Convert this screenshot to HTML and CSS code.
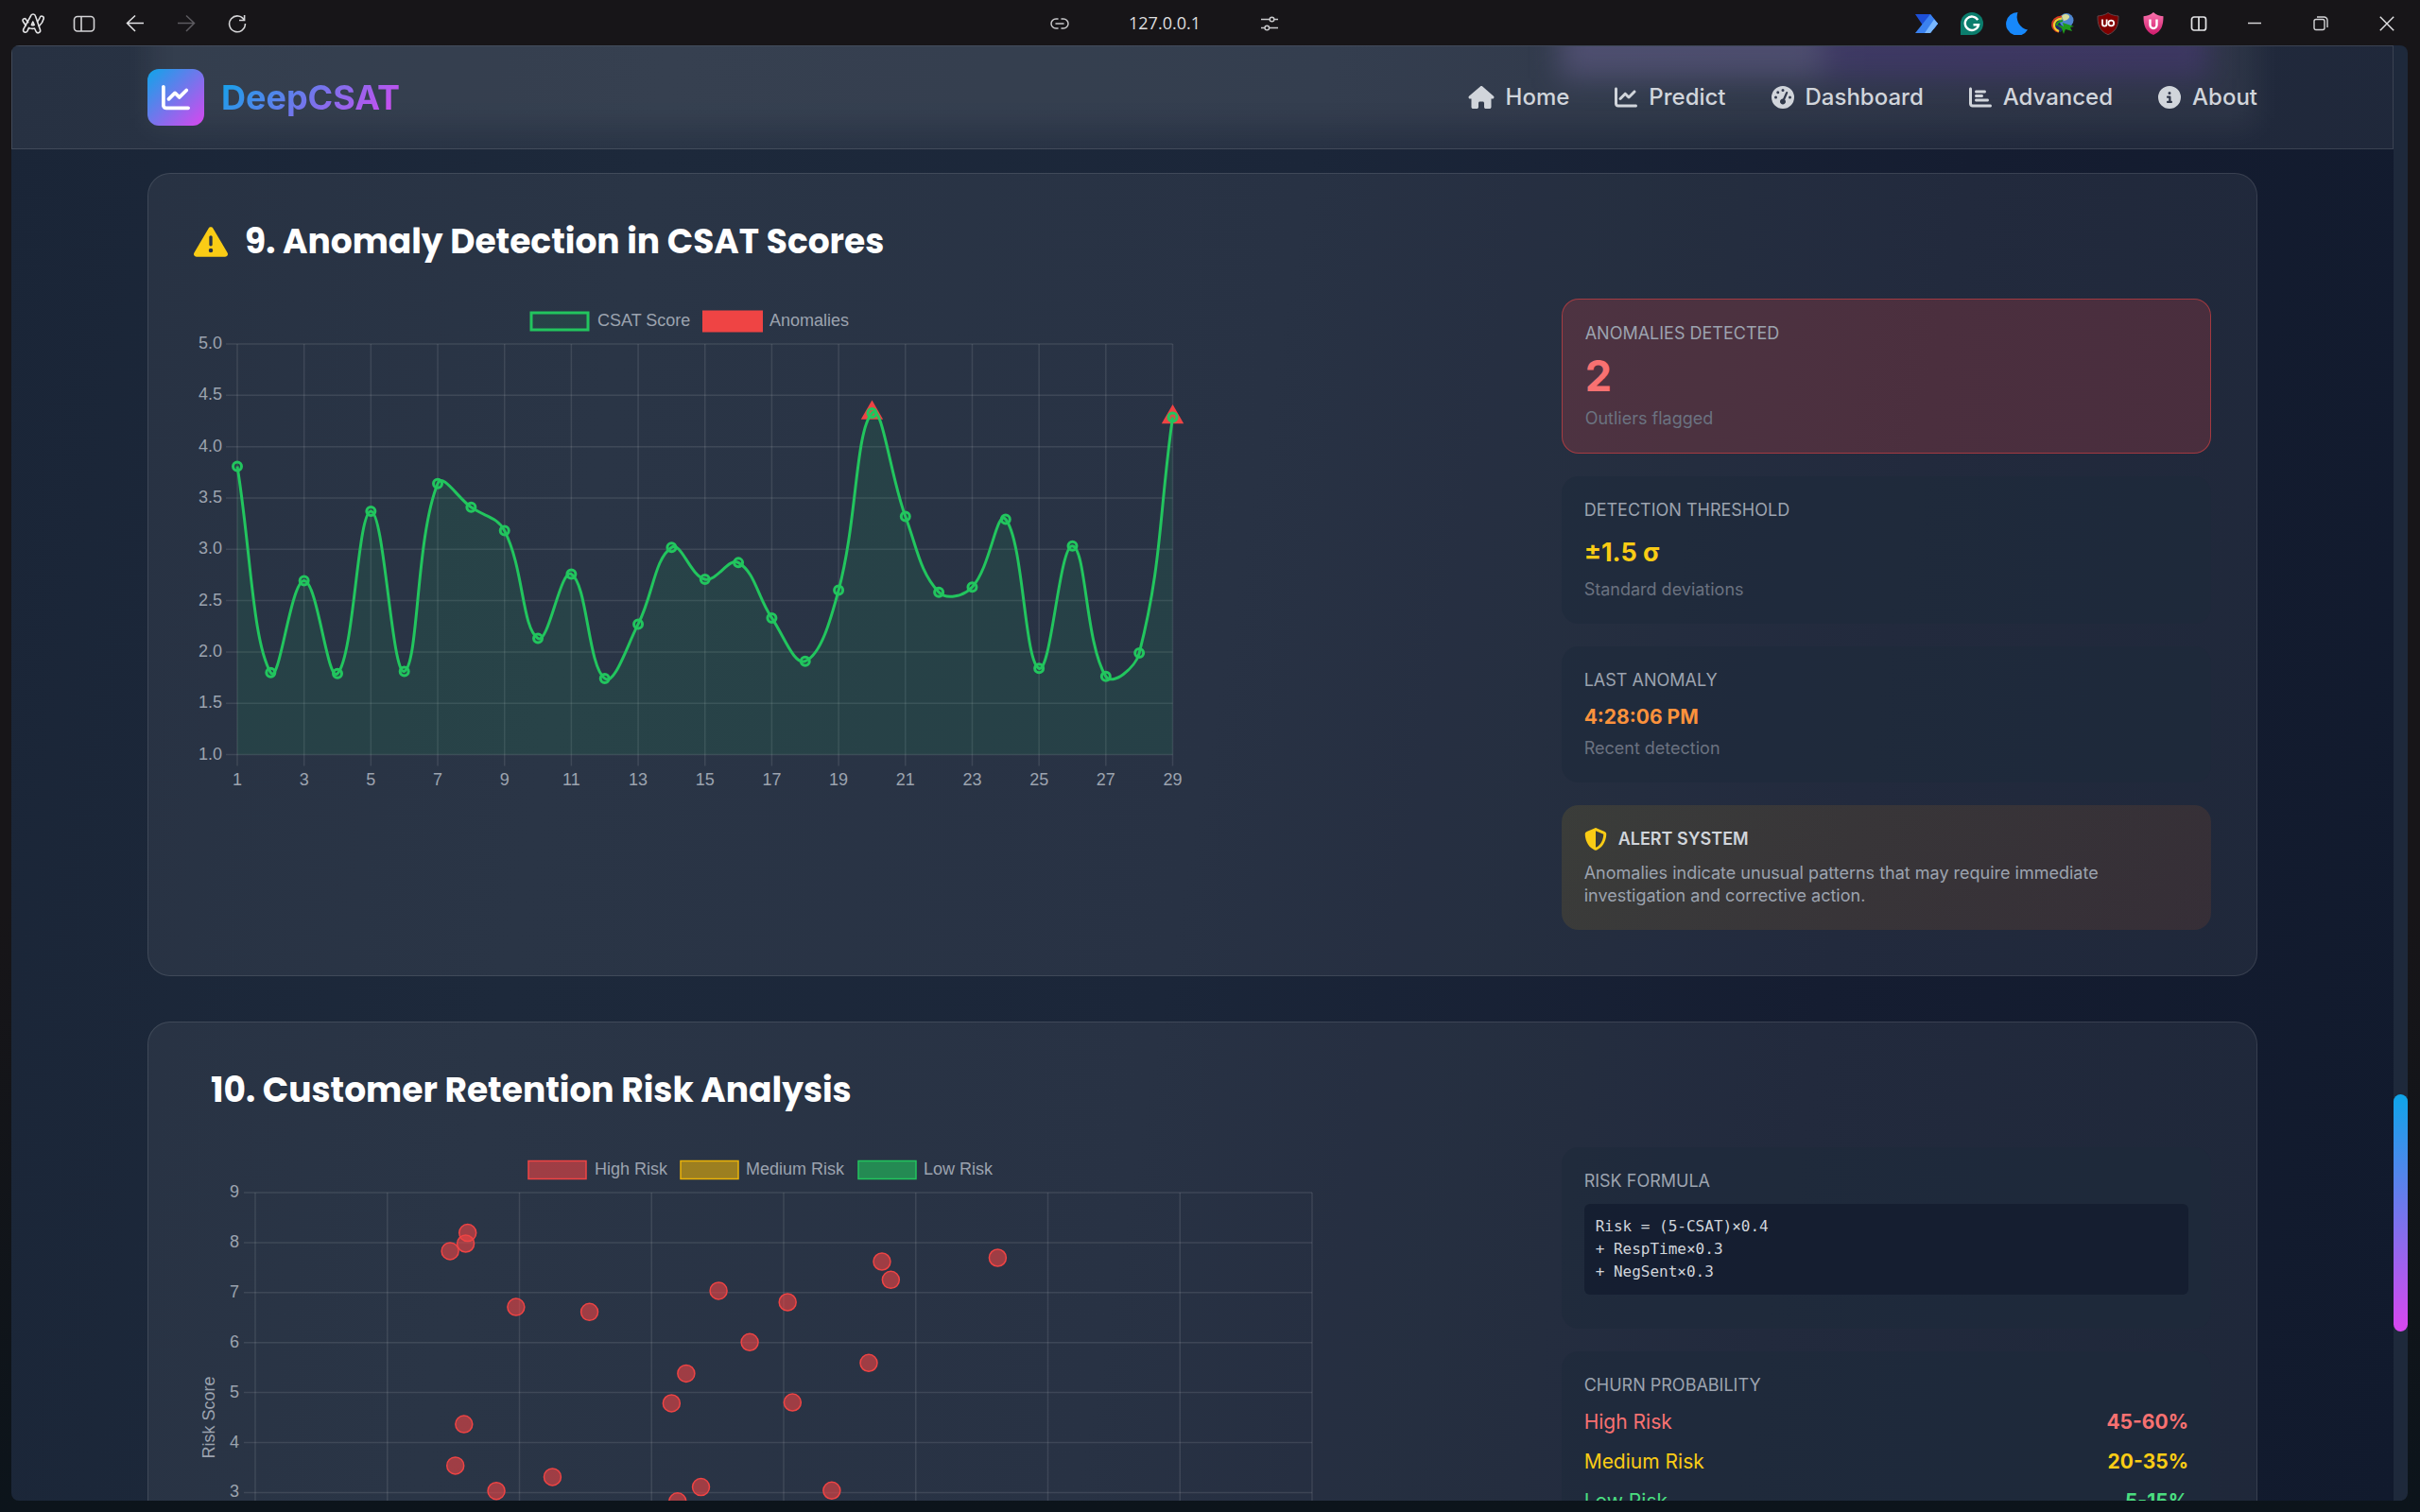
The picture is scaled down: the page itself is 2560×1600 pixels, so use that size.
FILE: index.html
```html
<!DOCTYPE html>
<html lang="en">
<head>
<meta charset="utf-8">
<meta name="viewport" content="width=device-width, initial-scale=1">
<title>DeepCSAT - Advanced Analytics</title>
<link rel="stylesheet" href="styles.css">
</head>
<body>
<header class="browser-bar">
  <div class="bar-group bar-left">
    <button class="tool" aria-label="Browser menu"><svg width="26" height="24" viewBox="0 0 26 24" fill="none" stroke="#e4e4e6" stroke-width="1.6" stroke-linejoin="round" stroke-linecap="round"><path d="M10.500 4c.6-2.600 4.400-2.600 5 0l5 14.500c.9 3-2.800 4.500-4.300 2l-1.700-3.500c-2 .6-4.200.3-6-.6l-1.500 3.500c-1.600 2.600-5 1-4.300-1.700z"/><path d="M12.800 10l-1.400 3.400c1 .3 2 .3 2.800 0z"/><path d="M5.500 14C4 12.300 3.200 11 2.300 9.500 1.300 7 4.600 5.500 5.800 8c.5 1 1.200 1.900 2 2.700"/><path d="M17.500 10c1.300-1.500 2.100-3 2.700-4.500.9-2.500 4.600-1.400 4 1.200-.8 3.300-2.600 5.900-4.900 8"/></svg></button>
    <button class="tool" aria-label="Toggle sidebar"><svg width="24" height="20" viewBox="0 0 24 20" fill="none" stroke="#d4d4d6" stroke-width="1.6"><rect x="1.500" y="2.500" width="21" height="15.500" rx="3.500"/><path d="M9 2.500V18"/></svg></button>
    <button class="tool" aria-label="Back"><svg width="20" height="20" viewBox="0 0 20 20" fill="none" stroke="#e4e4e6" stroke-width="1.500"><path d="M19 9.500H1.500M10 1.500l-8.500 8 8.500 8.500"/></svg></button>
    <button class="tool" aria-label="Forward"><svg width="20" height="20" viewBox="0 0 20 20" fill="none" stroke="#5d5b60" stroke-width="1.500"><path d="M1 9.500h17.500M10 1.500l8.500 8-8.500 8.500"/></svg></button>
    <button class="tool" aria-label="Reload"><svg width="20" height="20" viewBox="0 0 20 20" fill="none" stroke="#d4d4d6" stroke-width="1.600"><path d="M17.500 6.500A8.400 8.400 0 1 0 18.400 10M17.600 1v5.500H12"/></svg></button>
  </div>
  <div class="bar-group bar-address">
    <button class="tool-slim" aria-label="Copy link"><svg width="20" height="14" viewBox="0 0 20 14" fill="none" stroke="#c8c8ca" stroke-width="1.500" stroke-linecap="round"><path d="M8 2H6a5 5 0 0 0 0 10h2M12 2h2a5 5 0 0 1 0 10h-2M6 7h8"/></svg></button>
    <span class="address">127.0.0.1</span>
    <button class="tool-slim" aria-label="Site settings"><svg width="18" height="16" viewBox="0 0 18 16" fill="none" stroke="#c8c8ca" stroke-width="1.500"><path d="M0 3.500h9M14 3.500h4M0 12.500h4M9 12.500h9"/><circle cx="11.500" cy="3.500" r="2.300"/><circle cx="6.300" cy="12.500" r="2.300"/></svg></button>
  </div>
  <div class="bar-group bar-right">
    <button class="ext" aria-label="Power Automate"><svg width="24" height="22" viewBox="0 0 24 22"><path d="M0 1h16l8 10-4 5.500H10.500z" fill="#1d4fd7"/><path d="M0 21L16 1l8 10-8 10z" fill="#3b82f0"/><path d="M10 21L20 6.500l4 4.500-8 10z" fill="#7ab8ff"/></svg></button>
    <button class="ext" aria-label="Grammarly"><svg width="24" height="24" viewBox="0 0 24 24"><path d="M0 24V12a12 12 0 1 1 12 12z" fill="#0b7d6d"/><path d="M18.200 8.200A7.200 7.200 0 1 0 19 13.200h-5.500" fill="none" stroke="#fff" stroke-width="2.400"/></svg></button>
    <button class="ext" aria-label="Dark mode"><svg width="24" height="24" viewBox="0 0 24 24"><path d="M12.500 0A14 14 0 0 0 23 18.500 12.300 12.300 0 1 1 12.500 0z" fill="#1788fb"/></svg></button>
    <button class="ext" aria-label="Download manager"><svg width="24" height="22" viewBox="0 0 24 22"><path d="M11 3.500C4 4 1 8 1 12.500S6 20 10 20l4-5z" fill="#1d2a6b"/><circle cx="16" cy="7.500" r="7.500" fill="#4f86cf"/><path d="M11 3c3-3 7-2 8 0s-3 5-6 5z" fill="#d6dc9a"/><path d="M11 3.500C4 4 1 8 1 12.500S5 19 8 20" fill="none" stroke="#d93a1e" stroke-width="1.800"/><path d="M11.500 5.500C6 6 3 9 3 13s3 5 5 6" fill="none" stroke="#f2d02c" stroke-width="2.200"/><path d="M12 8C8 8.500 6 10 5.500 13" fill="none" stroke="#1f9a1c" stroke-width="2"/><path d="M5 12l8 2-1-4 12 4-4 1 2 4-7-2-2 5-2-6z" fill="#1f9a1c"/></svg></button>
    <button class="ext" aria-label="uBlock Origin"><svg width="24" height="24" viewBox="0 0 24 24"><path d="M12 .5c3.500 2.600 7.500 3 11 3.500 0 8-1 15.500-11 19.700C2 19.500 1 12 1 4c3.500-.5 7.500-.9 11-3.500z" fill="#800000" stroke="#5d4448"/><path d="M6 7.500v4.800a2.300 2.300 0 0 0 4.600 0V7.500" fill="none" stroke="#fff" stroke-width="1.800"/><circle cx="15.300" cy="11.500" r="2.900" fill="none" stroke="#fff" stroke-width="1.800"/></svg></button>
    <button class="ext" aria-label="U shield"><svg width="22" height="24" viewBox="0 0 22 24"><defs><linearGradient id="pink" x2="0" y2="1"><stop stop-color="#fb74ae"/><stop offset="1" stop-color="#cf1a6c"/></linearGradient></defs><path d="M11 0c3 2.700 6.500 3.800 10.500 4.200C21.500 13 20 20 11 24 2 20 .5 13 .5 4.200 4.500 3.800 8 2.700 11 0z" fill="url(#pink)"/><path d="M7.500 7.500v6a3.500 3.500 0 0 0 7 0v-6" fill="none" stroke="#fff" stroke-width="2.400"/></svg></button>
    <button class="ext" aria-label="Split view"><svg width="18" height="18" viewBox="0 0 18 18" fill="none" stroke="#e4e4e6" stroke-width="1.700"><rect x="1.500" y="2" width="15" height="14" rx="2.500"/><path d="M9 2v14"/></svg></button>
    <button class="win" aria-label="Minimize"><svg width="16" height="16" viewBox="0 0 16 16" fill="none" stroke="#d4d4d6" stroke-width="1.500"><path d="M1 7.500h14"/></svg></button>
    <button class="win" aria-label="Restore"><svg width="16" height="16" viewBox="0 0 16 16" fill="none" stroke="#d4d4d6" stroke-width="1.400"><rect x="1" y="3.500" width="11" height="11" rx="2"/><path d="M4 1h7.500A3.500 3.500 0 0 1 15 4.500V12"/></svg></button>
    <button class="win" aria-label="Close"><svg width="16" height="16" viewBox="0 0 16 16" fill="none" stroke="#e4e4e6" stroke-width="1.400"><path d="M.8.800l14.400 14.400M15.200.800L.800 15.200"/></svg></button>
  </div>
</header>

<div class="window">
  <div class="page">
    <nav class="navbar">
      <div class="container navbar-inner">
        <a class="brand" href="#home">
          <span class="brand-mark"><svg width="30" height="30" viewBox="0 0 512 512" fill="#fff"><path d="M64 64c0-17.700-14.300-32-32-32S0 46.300 0 64V400c0 44.200 35.800 80 80 80H480c17.700 0 32-14.300 32-32s-14.300-32-32-32H80c-8.800 0-16-7.200-16-16V64zm406.600 86.600c12.500-12.500 12.500-32.800 0-45.300s-32.800-12.500-45.300 0L320 210.700l-57.400-57.400c-12.500-12.500-32.800-12.500-45.300 0l-112 112c-12.500 12.500-12.500 32.800 0 45.300s32.800 12.500 45.300 0L240 221.300l57.400 57.400c12.500 12.500 32.800 12.500 45.300 0l128-128z"/></svg></span>
          <span class="brand-name">DeepCSAT</span>
        </a>
        <div class="nav-links">
          <a href="#home"><svg width="28" height="24" viewBox="0 0 576 512"><path d="M575.800 255.500c0 18-15 32.100-32 32.100h-32l.7 160.200c0 2.700-.2 5.400-.5 8.100V472c0 22.100-17.900 40-40 40H456c-1.100 0-2.200 0-3.300-.1c-1.400 .1-2.800 .1-4.200 .1H416 392c-22.100 0-40-17.900-40-40V448 384c0-17.700-14.300-32-32-32H256c-17.700 0-32 14.300-32 32v64 24c0 22.100-17.900 40-40 40H160 128.100c-1.500 0-3-.1-4.500-.2c-1.200 .1-2.400 .2-3.600 .2H104c-22.100 0-40-17.900-40-40V360c0-.9 0-1.900 .1-2.800V287.600H32c-18 0-32-14-32-32.100c0-9 3-17 10-24L266.400 8c7-7 15-8 22-8s15 2 21 7L564.800 231.500c8 7 12 15 11 24z"/></svg>Home</a>
          <a href="#predict"><svg width="24" height="24" viewBox="0 0 512 512"><path d="M64 64c0-17.700-14.300-32-32-32S0 46.300 0 64V400c0 44.200 35.800 80 80 80H480c17.700 0 32-14.300 32-32s-14.300-32-32-32H80c-8.800 0-16-7.200-16-16V64zm406.600 86.600c12.500-12.500 12.500-32.800 0-45.300s-32.800-12.500-45.300 0L320 210.700l-57.400-57.400c-12.500-12.500-32.800-12.500-45.300 0l-112 112c-12.500 12.500-12.500 32.800 0 45.300s32.800 12.500 45.300 0L240 221.300l57.400 57.400c12.500 12.500 32.800 12.500 45.300 0l128-128z"/></svg>Predict</a>
          <a href="#dashboard"><svg width="24" height="24" viewBox="0 0 512 512"><path d="M0 256a256 256 0 1 1 512 0A256 256 0 1 1 0 256zM288 96a32 32 0 1 0 -64 0 32 32 0 1 0 64 0zM256 416c35.300 0 64-28.700 64-64c0-17.400-6.900-33.100-18.100-44.600L366 161.700c5.300-12.100-.2-26.300-12.300-31.600s-26.300 .2-31.600 12.300L257.900 288c-.6 0-1.300 0-1.900 0c-35.300 0-64 28.700-64 64s28.700 64 64 64zM176 144a32 32 0 1 0 -64 0 32 32 0 1 0 64 0zM96 288a32 32 0 1 0 0-64 32 32 0 1 0 0 64zm352-32a32 32 0 1 0 -64 0 32 32 0 1 0 64 0z"/></svg>Dashboard</a>
          <a href="#advanced"><svg width="24" height="24" viewBox="0 0 512 512"><path d="M32 32c17.700 0 32 14.300 32 32V400c0 8.800 7.200 16 16 16H480c17.700 0 32 14.300 32 32s-14.300 32-32 32H80c-44.200 0-80-35.800-80-80V64C0 46.300 14.300 32 32 32zm96 96c0-17.700 14.300-32 32-32l192 0c17.700 0 32 14.300 32 32s-14.300 32-32 32l-192 0c-17.700 0-32-14.300-32-32zm32 64H288c17.700 0 32 14.300 32 32s-14.300 32-32 32H160c-17.700 0-32-14.300-32-32s14.300-32 32-32zm0 96H416c17.700 0 32 14.300 32 32s-14.300 32-32 32H160c-17.700 0-32-14.300-32-32s14.300-32 32-32z"/></svg>Advanced</a>
          <a href="#about"><svg width="24" height="24" viewBox="0 0 512 512"><path d="M256 512A256 256 0 1 0 256 0a256 256 0 1 0 0 512zM216 336h24V272H216c-13.300 0-24-10.700-24-24s10.700-24 24-24h48c13.300 0 24 10.700 24 24v88h8c13.300 0 24 10.700 24 24s-10.700 24-24 24H216c-13.300 0-24-10.700-24-24s10.700-24 24-24zm40-208a32 32 0 1 1 0 64 32 32 0 1 1 0-64z"/></svg>About</a>
        </div>
      </div>
    </nav>

    <main class="container sections">
      <section class="card">
        <h2 class="card-title"><svg width="36" height="36" viewBox="0 0 512 512" fill="#facc15"><path d="M256 32c14.200 0 27.300 7.500 34.500 19.800l216 368c7.300 12.400 7.300 27.700 .2 40.100S486.300 480 472 480H40c-14.300 0-27.600-7.700-34.700-20.100s-7-27.800 .2-40.100l216-368C228.700 39.500 241.800 32 256 32zm0 128c-13.300 0-24 10.700-24 24V296c0 13.300 10.700 24 24 24s24-10.700 24-24V184c0-13.300-10.700-24-24-24zm32 224a32 32 0 1 0 -64 0 32 32 0 1 0 64 0z"/></svg>9. Anomaly Detection in CSAT Scores</h2>
        <div class="card-grid">
          <div class="chart-area">
            <svg class="chart" id="anomaly-chart" width="1060" height="528" viewBox="0 0 1060 528" role="img" aria-label="CSAT score line chart with anomalies"></svg>
          </div>
          <div class="stats">
            <div class="stat stat-danger">
              <p class="stat-label">ANOMALIES DETECTED</p>
              <p class="stat-value value-xl">2</p>
              <p class="stat-note">Outliers flagged</p>
            </div>
            <div class="stat">
              <p class="stat-label label-spaced">DETECTION THRESHOLD</p>
              <p class="stat-value value-lg">±1.5 σ</p>
              <p class="stat-note">Standard deviations</p>
            </div>
            <div class="stat">
              <p class="stat-label label-spaced">LAST ANOMALY</p>
              <p class="stat-value value-md">4:28:06 PM</p>
              <p class="stat-note">Recent detection</p>
            </div>
            <div class="stat stat-alert">
              <p class="alert-title"><svg width="24" height="24" viewBox="0 0 512 512" fill="#facc15"><path d="M256 0c4.600 0 9.200 1 13.400 2.900L457.700 82.800c22 9.300 38.400 31 38.300 57.200c-.5 99.200-41.300 280.700-213.600 363.200c-16.700 8-36.100 8-52.800 0C57.300 420.700 16.500 239.200 16 140c-.1-26.200 16.300-47.900 38.300-57.200L242.700 2.900C246.800 1 251.400 0 256 0zm0 66.800V444.800C394 378 431.100 230.100 432 141.400L256 66.800l0 0z"/></svg>ALERT SYSTEM</p>
              <p class="alert-text">Anomalies indicate unusual patterns that may require immediate investigation and corrective action.</p>
            </div>
          </div>
        </div>
      </section>

      <section class="card">
        <h2 class="card-title"><span class="title-icon"></span>10. Customer Retention Risk Analysis</h2>
        <div class="card-grid">
          <div class="chart-area">
            <svg class="chart" id="risk-chart" width="1200" height="600" viewBox="0 0 1200 600" role="img" aria-label="Customer retention risk scatter chart"></svg>
          </div>
          <div class="stats">
            <div class="stat">
              <p class="stat-label label-spaced">RISK FORMULA</p>
              <pre class="formula">Risk = (5-CSAT)×0.4
+ RespTime×0.3
+ NegSent×0.3</pre>
            </div>
            <div class="stat">
              <p class="stat-label label-spaced">CHURN PROBABILITY</p>
              <dl class="churn">
                <div class="churn-row high"><dt>High Risk</dt><dd>45-60%</dd></div>
                <div class="churn-row medium"><dt>Medium Risk</dt><dd>20-35%</dd></div>
                <div class="churn-row low"><dt>Low Risk</dt><dd>5-15%</dd></div>
              </dl>
            </div>
          </div>
        </div>
      </section>
    </main>
  </div>
  <div class="scroll-track"><div class="scroll-thumb"></div></div>
</div>
<script src="charts.js"></script>
</body>
</html>
```
FILE: styles.css
```css
*, *::before, *::after { box-sizing: border-box; }

body {
  margin: 0;
  height: 100vh;
  display: flex;
  flex-direction: column;
  overflow: hidden;
  background: linear-gradient(#171518 60%, #0c141b);
  font-family: Inter, "Liberation Sans", sans-serif;
  font-size: 24px;
  color: #fff;
}

p, h2, dl, dd, pre { margin: 0; }
svg { display: block; flex: none; }
a { color: inherit; text-decoration: none; }

/* Browser toolbar */
.browser-bar {
  height: 48px;
  flex: none;
  display: grid;
  grid-template-columns: 1fr auto 1fr;
}
.bar-group { display: flex; align-items: center; }
.bar-left { padding-left: 8px; }
.bar-address { padding-right: 96px; }
.bar-right { justify-content: flex-end; }
.browser-bar button {
  height: 48px;
  padding: 2px 0 0;
  border: 0;
  background: none;
  display: flex;
  align-items: center;
  justify-content: center;
}
.tool { width: 54px; }
.tool-slim { width: 40px; }
.ext { width: 48px; }
.win { width: 70px; }
.address {
  width: 182px;
  text-align: center;
  font: 18px/24px "Open Sans", sans-serif;
  color: #dededf;
}

/* Page frame */
.window {
  flex: 1;
  min-height: 0;
  margin: 0 13px 12px 12px;
  display: flex;
  border-radius: 8px;
  overflow: hidden;
}
.page {
  flex: 1;
  overflow: hidden;
  background: linear-gradient(100deg, #1a2537 0%, #1d293b 25%, #1b2639 50%, #151d31 75%, #111a2d 100%);
}
.scroll-track {
  width: 15px;
  background: #1e293b;
  display: grid;
  grid-template-rows: 1110fr 251fr 179fr;
}
.scroll-thumb {
  grid-row: 2;
  border-radius: 8px;
  background: linear-gradient(#0ea5e9, #d946ef);
}
.container { width: calc(100% - 96px); max-width: 2232px; margin: 0 auto; }

/* Navigation */
.navbar {
  position: relative;
  z-index: 0;
  overflow: hidden;
  border: 1px solid rgba(255, 255, 255, 0.12);
  background: rgba(255, 255, 255, 0.06);
}
/* Frosted remains of the card and panel scrolled underneath */
.navbar::before,
.navbar::after {
  content: "";
  position: absolute;
  z-index: -1;
  filter: blur(15px);
}
.navbar::before {
  inset: -40px 144px 22px;
  background: rgba(255, 255, 255, 0.06);
}
.navbar::after {
  inset: -40px 194px 74px 65%;
  background: linear-gradient(90deg, rgba(125, 110, 170, 0.38) 40%, rgba(90, 60, 150, 0.34) 41%);
}
.navbar-inner {
  height: 108px;
  display: flex;
  align-items: center;
  justify-content: space-between;
}
.brand { display: flex; align-items: center; gap: 18px; }
.brand-mark {
  width: 60px;
  height: 60px;
  display: grid;
  place-items: center;
  border-radius: 12px;
  background: linear-gradient(135deg, #0ea5e9, #d946ef);
}
.brand-name {
  font-size: 36px;
  line-height: 48px;
  font-weight: 700;
  background: linear-gradient(135deg, #0ea5e9, #d946ef);
  -webkit-background-clip: text;
  background-clip: text;
  color: transparent;
}
.nav-links { display: flex; gap: 48px; }
.nav-links a {
  display: flex;
  align-items: center;
  gap: 12px;
  line-height: 36px;
  font-weight: 500;
  color: #d1d5db;
}
.nav-links svg { fill: #d1d5db; }

/* Cards */
.sections {
  padding-top: 25px;
  display: flex;
  flex-direction: column;
  gap: 48px;
}
.card {
  padding: 48px;
  border: 1px solid rgba(255, 255, 255, 0.11);
  border-radius: 24px;
  background: rgba(255, 255, 255, 0.058);
}
.card-title {
  display: flex;
  align-items: center;
  gap: 18px;
  margin-bottom: 36px;
  font: 700 36px/48px Poppins, Inter, sans-serif;
}
.card-grid {
  display: grid;
  grid-template-columns: repeat(3, minmax(0, 1fr));
  gap: 36px;
}
.chart-area { grid-column: span 2; }
.chart { max-width: 100%; font: 18px "Liberation Sans", sans-serif; }
.chart text { fill: #9ca3af; }

/* Statistic panels */
.stats { display: flex; flex-direction: column; gap: 24px; }
.stat {
  padding: 24px;
  border-radius: 18px;
  background: rgba(30, 42, 59, 0.55);
  font-size: 18px;
  line-height: 24px;
}
.stat-danger { background: rgba(239, 68, 68, 0.2); border: 1px solid rgba(239, 68, 68, 0.55); }
.stat-alert { background: linear-gradient(135deg, rgba(234, 179, 8, 0.11), rgba(249, 100, 22, 0.1)); }
.stat-label { margin-bottom: 6px; color: #9ca3af; }
.label-spaced { margin-bottom: 12px; }
.stat-value { margin-bottom: 6px; font-weight: 700; }
.value-xl { font-size: 45px; line-height: 54px; color: #f87171; }
.value-lg { font-size: 27px; line-height: 42px; color: #facc15; }
.value-md { font-size: 21px; line-height: 30px; color: #fb923c; }
.stat-note { color: #6b7280; }
.alert-title {
  display: flex;
  gap: 12px;
  margin-bottom: 12px;
  font-weight: 600;
  color: #d1d5db;
}
.alert-text { color: #9ca3af; }

.formula {
  margin-bottom: 12px;
  padding: 12px;
  border-radius: 6px;
  background: rgba(15, 23, 42, 0.6);
  font: 16px/24px "DejaVu Sans Mono", monospace;
  color: #d1d5db;
}
.churn { display: flex; flex-direction: column; gap: 12px; font-size: 21px; line-height: 30px; }
.churn-row { display: flex; justify-content: space-between; }
.churn dd { font-weight: 700; }
.high { color: #f87171; }
.medium { color: #facc15; }
.low { color: #4ade80; }
```
FILE: charts.js
```js
const NS = 'http://www.w3.org/2000/svg';
const GRID = 'rgba(255,255,255,0.1)';

function add(parent, tag, attrs, text) {
  const el = document.createElementNS(NS, tag);
  for (const key in attrs) el.setAttribute(key, attrs[key]);
  if (text !== undefined) el.textContent = text;
  parent.appendChild(el);
  return el;
}

function line(svg, x1, y1, x2, y2) {
  add(svg, 'line', { x1, y1, x2, y2, stroke: GRID, 'stroke-width': 1.5 });
}

function legend(svg, items) {
  for (const it of items) {
    add(svg, 'rect', {
      x: it.x, y: 24 - it.h / 2, width: it.w, height: it.h,
      fill: it.fill, stroke: it.stroke, 'stroke-width': it.sw
    });
    add(svg, 'text', { x: it.tx, y: 29 }, it.label);
  }
}

// Tension 0.4 spline through the points, with control points kept inside the plot area
function spline(pts, top, bottom) {
  const clamp = v => Math.max(top, Math.min(bottom, v));
  const ctrl = pts.map((p, i) => {
    const a = pts[i - 1] || p, b = pts[i + 1] || p;
    const d1 = Math.hypot(p[0] - a[0], p[1] - a[1]);
    const d2 = Math.hypot(b[0] - p[0], b[1] - p[1]);
    const f1 = 0.4 * d1 / (d1 + d2), f2 = 0.4 * d2 / (d1 + d2);
    const dx = b[0] - a[0], dy = b[1] - a[1];
    return [p[0] - f1 * dx, clamp(p[1] - f1 * dy), p[0] + f2 * dx, clamp(p[1] + f2 * dy)];
  });
  let d = 'M' + pts[0];
  for (let i = 1; i < pts.length; i++) {
    const c = ctrl[i - 1], n = ctrl[i];
    d += ` C${c[2]} ${c[3]} ${n[0]} ${n[1]} ${pts[i][0]} ${pts[i][1]}`;
  }
  return d;
}

function anomalyChart() {
  const svg = document.getElementById('anomaly-chart');
  const left = 46, right = 1035.5, top = 48, bottom = 482.5;
  const scores = [3.808, 1.799, 2.693, 1.789, 3.371, 1.811, 3.640, 3.409, 3.181, 2.132,
    2.759, 1.742, 2.271, 3.019, 2.708, 2.870, 2.331, 1.910, 2.601, 4.328,
    3.320, 2.582, 2.632, 3.292, 1.840, 3.032, 1.761, 1.989, 4.287];
  const x = i => left + (right - left) * i / 28;
  const y = v => bottom - (v - 1) * (bottom - top) / 4;

  legend(svg, [
    { x: 357, w: 60, h: 18, tx: 427, sw: 3, fill: 'rgba(34,197,94,0.1)', stroke: '#22c55e', label: 'CSAT Score' },
    { x: 539, w: 62, h: 21, tx: 609, sw: 2, fill: '#ef4444', stroke: '#ef4444', label: 'Anomalies' }
  ]);
  for (let v = 1; v <= 5; v += 0.5) {
    line(svg, left - 12, y(v), right, y(v));
    add(svg, 'text', { x: 30, y: y(v) + 5, 'text-anchor': 'end' }, v.toFixed(1));
  }
  for (let i = 0; i < 29; i += 2) {
    line(svg, x(i), top, x(i), bottom + 12);
    add(svg, 'text', { x: x(i), y: 515, 'text-anchor': 'middle' }, i + 1);
  }
  for (const i of [19, 28]) {
    const cx = x(i), cy = y(scores[i]);
    add(svg, 'path', { d: `M${cx} ${cy - 12}L${cx + 10.4} ${cy + 6}H${cx - 10.4}Z`, fill: '#ef4444', stroke: '#ef4444', 'stroke-width': 1.5 });
  }
  const pts = scores.map((v, i) => [x(i), y(v)]);
  const d = spline(pts, top, bottom);
  add(svg, 'path', { d: `${d}V${bottom}H${left}Z`, fill: 'rgba(34,197,94,0.1)' });
  add(svg, 'path', { d, fill: 'none', stroke: '#22c55e', 'stroke-width': 3 });
  for (const [cx, cy] of pts) {
    add(svg, 'circle', { cx, cy, r: 4.5, fill: 'rgba(34,197,94,0.1)', stroke: '#22c55e', 'stroke-width': 3 });
  }
}

function riskChart() {
  const svg = document.getElementById('risk-chart');
  const left = 65, right = 1183, top = 48, unit = 52.9;
  const points = [[1.608, 8.195], [1.593, 7.979], [1.475, 7.830], [1.974, 6.711], [2.530, 6.612],
    [3.507, 7.036], [3.743, 6.008], [3.262, 5.382], [3.151, 4.785], [1.580, 4.367], [1.515, 3.539],
    [1.825, 3.032], [2.250, 3.312], [3.374, 3.110], [3.197, 2.822], [4.744, 7.620], [4.811, 7.255],
    [5.620, 7.696], [4.030, 6.807], [4.644, 5.592], [4.067, 4.803], [4.364, 3.040]];
  const x = v => left + (right - left) * v / 8;
  const y = v => top + (9 - v) * unit;

  legend(svg, [
    { x: 354, w: 61, h: 19, tx: 424, sw: 1.5, fill: 'rgba(239,68,68,0.6)', stroke: '#ef4444', label: 'High Risk' },
    { x: 515, w: 61, h: 19, tx: 584, sw: 1.5, fill: 'rgba(234,179,8,0.6)', stroke: '#eab308', label: 'Medium Risk' },
    { x: 703, w: 61, h: 19, tx: 772, sw: 1.5, fill: 'rgba(34,197,94,0.6)', stroke: '#22c55e', label: 'Low Risk' }
  ]);
  for (let v = 0; v <= 9; v++) {
    line(svg, left - 12, y(v), right, y(v));
    if (v > 2) add(svg, 'text', { x: 48, y: y(v) + 5, 'text-anchor': 'end' }, v);
  }
  for (let i = 0; i <= 8; i++) line(svg, x(i), top, x(i), y(0) + 12);
  add(svg, 'text', { transform: 'translate(22 286) rotate(-90)', 'text-anchor': 'middle' }, 'Risk Score');
  for (const [px, py] of points) {
    add(svg, 'circle', { cx: x(px), cy: y(py), r: 9, fill: 'rgba(239,68,68,0.6)', stroke: '#ef4444', 'stroke-width': 1.5 });
  }
}

anomalyChart();
riskChart();
```
